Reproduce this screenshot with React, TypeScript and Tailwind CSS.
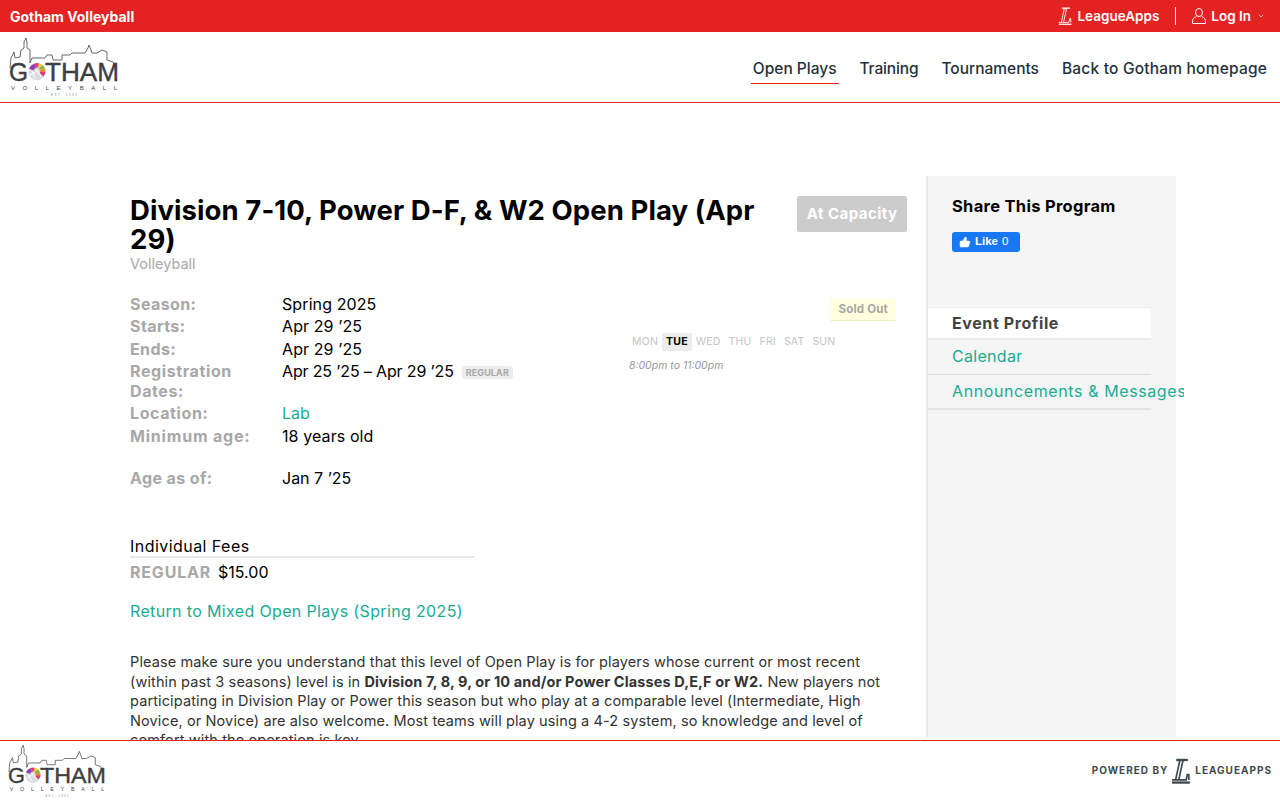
import { ChevronDown, ThumbsUp } from "lucide-react";

const sans = "font-['Inter',sans-serif]";

const details = [
  { label: "Season:", value: "Spring 2025" },
  { label: "Starts:", value: "Apr 29 ’25" },
  { label: "Ends:", value: "Apr 29 ’25" },
];

const days = ["MON", "TUE", "WED", "THU", "FRI", "SAT", "SUN"];

function LaMark({ className, weight = 1.2 }: { className?: string; weight?: number }) {
  return (
    <svg viewBox="0 0 20 24" className={className} fill="none" stroke="currentColor" aria-hidden="true">
      <path d="M5 1.500h11" strokeWidth={weight * 1.4} />
      <path d="M8.500 1.500 4.500 20M11.500 1.500 7.500 20" strokeWidth={weight} />
      <path d="M1 20.500h13.500l1-5h1.500v5" strokeWidth={weight} />
      <path d="M1 23h17" strokeWidth={weight * 1.4} />
    </svg>
  );
}

function UserMark() {
  return (
    <svg viewBox="0 0 14 16" className="h-4 w-[14px]" fill="none" stroke="currentColor" strokeWidth="1" aria-hidden="true">
      <ellipse cx="7" cy="4.500" rx="3.500" ry="4" />
      <path d="M4.500 8.500C2.500 9.500 .5 10.500 .5 13v2.500h13V13c0-2.500-2-3.500-4-4.500" />
    </svg>
  );
}

function Logo({ className }: { className?: string }) {
  return (
    <svg viewBox="0 0 110 60" className={className} aria-hidden="true">
      <path
        d="M1 31 2 21 5 15 6 21 11 20 12 13 15 11V5L17 1 18 5V11L21 13V26L23 21H36L38 18H43L44 23H53V18H61L63 16H76L79 11 80 8 82 13 83 16H88L93 13 98 15V23L104 25 107 33"
        fill="none"
        stroke="#55585c"
        strokeWidth=".9"
      />
      <text x="0" y="44" fontFamily="'Liberation Sans',sans-serif" fontSize="25" fill="#3c3e42" stroke="#3c3e42" strokeWidth=".4" textLength="19" lengthAdjust="spacingAndGlyphs">G</text>
      <text x="36" y="44" fontFamily="'Liberation Sans',sans-serif" fontSize="25" fill="#3c3e42" stroke="#3c3e42" strokeWidth=".4" textLength="74" lengthAdjust="spacingAndGlyphs">THAM</text>
      <circle cx="28" cy="35" r="8.500" fill="#dcdcdc" />
      <path d="M20 31.500a9 9 0 0 1 5.500-5l1.500 4-3 3z" fill="#8d3fb5" />
      <path d="M25.500 26.500a9 9 0 0 1 4.500-.2l-1 4-2 .5z" fill="#e6397d" />
      <path d="M30 26.300a9 9 0 0 1 3.500 1.700l-3.500 3.500-1-1z" fill="#f4d21f" />
      <path d="M33.500 28a9 9 0 0 1 2.300 3l-5 2-.8-1.500z" fill="#6fc04a" />
      <path d="M35.800 31a9 9 0 0 1 .7 3.500l-5.500.5-.2-2z" fill="#f08a24" />
      <path d="M36.500 34.500a9 9 0 0 1-2 5l-3.500-3 .000-1.500z" fill="#e6397d" />
      <path d="M23 33l3 8.500M27 32l5 7.500M21 38l7-4" stroke="#fff" strokeWidth=".9" fill="none" />
      <text x="2" y="53" fontFamily="'Liberation Sans',sans-serif" fontSize="6" fill="#44474b" textLength="106">VOLLEYBALL</text>
      <text x="42" y="59" fontFamily="'Liberation Sans',sans-serif" fontSize="3" fill="#888" textLength="26">EST. 1981</text>
    </svg>
  );
}

export default function App() {
  return (
    <div className={`flex h-screen flex-col overflow-hidden bg-white ${sans}`}>
      <div className="flex h-8 shrink-0 items-center justify-between bg-[#e42222] pl-2.5 pr-[15px] text-white">
        <span className="text-[14px] font-bold">Gotham Volleyball</span>
        <div className="flex items-center">
          <LaMark className="mr-1 h-[18px] w-[15px]" />
          <span className="text-[13.500px] font-semibold">LeagueApps</span>
          <span className="ml-4 mr-4 h-[18px] w-px bg-white" />
          <UserMark />
          <span className="ml-[5px] text-[13.500px] font-semibold">Log In</span>
          <ChevronDown size={8} className="ml-[6px]" />
        </div>
      </div>

      <header className="flex h-[71px] shrink-0 items-center justify-between border-b border-[#e42222] pl-[9px] pr-[13px]">
        <Logo className="h-[60px] w-[110px]" />
        <nav className="mt-[4px] flex items-center gap-[23px] text-[15.500px] font-medium text-[#25323c]">
          <a className="-mx-[2px] border-b border-[#e42222] px-[2px] pb-[3px] pt-[3px]">Open Plays</a>
          <a className="pb-[4px] pt-[3px] tracking-[-.15px]">Training</a>
          <a className="pb-[4px] pt-[3px]">Tournaments</a>
          <a className="pb-[4px] pt-[3px] tracking-[.2px]">Back to Gotham homepage</a>
        </nav>
      </header>

      <main className="flex min-h-0 flex-1 pl-[130px] pt-[73px]">
        <div className="h-[600px] w-[777px] overflow-hidden pt-5 text-black">
          <div className="flex items-start justify-between">
            <div className="w-[640px]">
              <h1 className="text-[27.500px] font-bold leading-[29px] tracking-[.08px]">Division 7-10, Power D-F, &amp; W2 Open Play (Apr 29)</h1>
              <p className="mt-0 text-[14.500px] leading-5 text-[#a8a8a8]">Volleyball</p>
            </div>
            <span className="rounded-[2px] bg-[#cccccc] px-[9.500px] py-2 text-[15px] font-bold leading-5 tracking-[.45px] text-white">At Capacity</span>
          </div>

          <div className="mt-[19px] flex justify-between">
            <div className="grid w-[400px] grid-cols-[152px_1fr] text-[16px] leading-[22.400px]">
              {details.map((d) => (
                <div key={d.label} className="contents">
                  <span className="font-bold tracking-[.4px] text-[#a8a8a8]">{d.label}</span>
                  <span className="tracking-[.1px]">{d.value}</span>
                </div>
              ))}
              <span className="pb-px pr-5 pt-px font-bold leading-5 tracking-[.6px] text-[#a8a8a8]">Registration Dates:</span>
              <span className="whitespace-nowrap tracking-[-.15px]">
                Apr 25 ’25 – Apr 29 ’25
                <span className="ml-2 rounded-[3px] bg-[#ececec] px-1 py-[1px] align-[1px] text-[9px] font-bold tracking-[.1px] text-[#a8a8a8]">REGULAR</span>
              </span>
              <span className="font-bold tracking-[.6px] text-[#a8a8a8]">Location:</span>
              <span className="text-[#1aab94]">Lab</span>
              <span className="font-bold tracking-[.8px] text-[#a8a8a8]">Minimum age:</span>
              <span className="tracking-[.1px]">18 years old</span>
              <span className="mt-5 font-bold tracking-[.4px] text-[#a8a8a8]">Age as of:</span>
              <span className="mt-5">Jan 7 ’25</span>
            </div>

            <div className="mr-[11px] mt-[6px] flex w-[267px] flex-col items-start">
              <span className="self-end rounded-[2px] border-b border-[#eeeebb] bg-[#ffffdd] px-2 py-[3px] text-[11.500px] font-bold leading-[15px] tracking-[.2px] text-[#a8a8a8]">Sold Out</span>
              <div className="-ml-px mt-3 flex text-[10.500px] leading-[18px] tracking-[.2px] text-[#c4c4c4]">
                {days.map((d) =>
                  d === "TUE" ? (
                    <span key={d} className="rounded-[2px] bg-[#ececec] px-1 font-bold text-black">{d}</span>
                  ) : (
                    <span key={d} className="px-1">{d}</span>
                  ),
                )}
              </div>
              <span className="mt-[6px] text-[10.500px] italic leading-[18px] text-[#999999]">8:00pm to 11:00pm</span>
            </div>
          </div>

          <div className="mt-[47px] w-[345px] border-b-2 border-[#e8e8e8] text-[16px] leading-[20px] tracking-[.45px]">Individual Fees</div>
          <div className="mt-[4px] flex items-baseline gap-[7px] text-[16px] leading-5">
            <span className="font-bold tracking-[.8px] text-[#a8a8a8]">REGULAR</span>
            <span>$15.00</span>
          </div>
          <a className="mt-[19px] block text-[16px] leading-5 tracking-[.35px] text-[#1aab94]">Return to Mixed Open Plays (Spring 2025)</a>
          <p className="mt-[31px] w-[760px] text-[14.500px] leading-[19.500px] tracking-[.12px] text-[#333333]">
            Please make sure you understand that this level of Open Play is for players whose current or most recent (within past 3 seasons) level is in{" "}
            <b>Division 7, 8, 9, or 10 and/or Power Classes D,E,F or W2.</b> New players not participating in Division Play or Power this season but who play at a comparable level (Intermediate, High Novice, or Novice) are also welcome. Most teams will play using a 4-2 system, so knowledge and level of comfort with the operation is key.
          </p>
        </div>

        <aside className="ml-[19px] h-[561px] w-[258px] overflow-hidden">
          <div className="h-full w-[250px] border-l-2 border-[#e8e8e8] bg-[#f5f5f5]">
            <div className="pl-6 pt-5">
              <h2 className="text-[16.500px] font-bold leading-5 tracking-[.3px] text-black">Share This Program</h2>
              <button className="mt-4 flex h-5 w-[68px] items-center gap-1 rounded-[3px] bg-[#1877f2] pl-[7px] font-['Liberation_Sans',sans-serif] text-[11.500px] text-white">
                <ThumbsUp size={12} fill="white" strokeWidth={1} />
                <span className="font-bold">Like</span> 0
              </button>
            </div>
            <nav className="mt-[55px] w-[223px] text-[16px]">
              <div className="flex h-[33px] items-center border-b-2 border-t border-[#ececec] bg-white pl-6 font-bold tracking-[.6px] text-[#444444]">Event Profile</div>
              <a className="flex h-[35px] items-center border-b border-[#dddddd] pb-[2px] pl-6 tracking-[.3px] text-[#1aab94]">Calendar</a>
              <a className="flex h-[35px] items-center whitespace-nowrap border-b-2 border-[#e4e4e4] pb-[2px] pl-6 tracking-[.6px] text-[#1aab94]">Announcements &amp; Messages</a>
            </nav>
          </div>
        </aside>
      </main>

      <footer className="flex h-[60px] shrink-0 items-center justify-between border-t border-[#e42222] bg-white pl-2 pr-2">
        <Logo className="h-[54px] w-[98px]" />
        <div className="flex items-center text-[10px] font-bold tracking-[1px] text-[#3f4a50]">
          <span>POWERED BY</span>
          <LaMark className="mx-[3px] h-[26px] w-[21px]" weight={1.6} />
          <span>LEAGUEAPPS</span>
        </div>
      </footer>
    </div>
  );
}
